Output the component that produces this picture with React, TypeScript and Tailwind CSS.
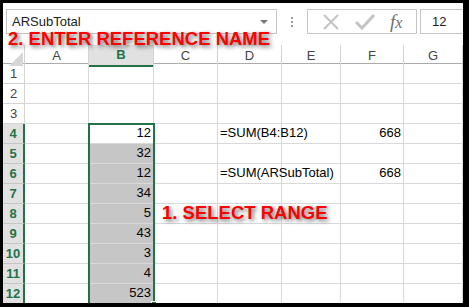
import React from "react";

const COLS = ["A", "B", "C", "D", "E", "F", "G"];
const GRID = "grid grid-cols-[22px_64px_65px_64px_64px_59px_63px_1fr]";

// column B values, rows 4..12
const values: Record<number, string> = {
  4: "12",
  5: "32",
  6: "12",
  7: "34",
  8: "5",
  9: "43",
  10: "3",
  11: "4",
  12: "523",
};

const XIcon = () => (
  <svg width="18" height="18" viewBox="0 0 18 18" fill="none">
    <path d="M2 2 L16 16 M16 2 L2 16" stroke="#c4c4c4" strokeWidth="2" />
  </svg>
);

const CheckIcon = () => (
  <svg width="20" height="16" viewBox="0 0 20 16" fill="none">
    <path d="M1 8 L7 14 L19 1" stroke="#c4c4c4" strokeWidth="3" />
  </svg>
);

const Cell = ({ children, right, className = "" }: { children?: React.ReactNode; right?: boolean; className?: string }) => (
  <div
    className={`h-[20px] border-r border-b border-[#d9d9d9] flex items-end pb-[2px] whitespace-nowrap overflow-visible text-[13px] leading-[16px] text-black ${
      right ? "justify-end pr-[2px]" : "pl-[2px]"
    } ${className}`}
  >
    {children}
  </div>
);

const App = () => {
  const rows = Array.from({ length: 12 }, (_, i) => i + 1);

  return (
    <div className="w-[469px] h-[307px] bg-black pt-[3px] pl-[3px] pr-[6px] pb-[4px] font-['Liberation_Sans',Arial,sans-serif]">
      <div className="relative w-full h-full bg-white overflow-hidden flex flex-col">
        {/* formula bar */}
        <div className="h-[42px] flex items-start pt-[6px] pl-[3px] shrink-0">
          <div className="w-[271px] h-[25px] border border-[#c6c6c6] flex items-center justify-between pl-[5px] pr-[8px]">
            <span className="text-[13px] text-[#222]">ARSubTotal</span>
            <span className="w-0 h-0 border-l-[4px] border-r-[4px] border-t-[4px] border-l-transparent border-r-transparent border-t-[#777]" />
          </div>
          <div className="w-[30px] h-[25px] flex flex-col items-center justify-center gap-[2px]">
            <span className="w-[2px] h-[2px] bg-[#9a9a9a]" />
            <span className="w-[2px] h-[2px] bg-[#9a9a9a]" />
            <span className="w-[2px] h-[2px] bg-[#9a9a9a]" />
          </div>
          <div className="w-[110px] h-[25px] border border-[#c6c6c6] flex items-center justify-around px-[6px]">
            <XIcon />
            <CheckIcon />
            <span className="font-['Liberation_Serif',serif] italic text-[19px] text-[#6f6f6f] leading-none">
              f<span className="text-[16px]">x</span>
            </span>
          </div>
          <div className="ml-[3px] flex-1 h-[25px] border border-[#c6c6c6] border-r-0 flex items-center pl-[11px]">
            <span className="text-[13px] text-[#222]">12</span>
          </div>
        </div>

        {/* sheet */}
        <div className="relative flex-1">
          {/* column headers */}
          <div className={`${GRID} h-[19px] border-b border-[#ababab]`}>
            <div className="border-r border-[#d4d4d4] flex items-end justify-end pr-[1px] pb-[1px]">
              <svg width="14" height="14" viewBox="0 0 14 14">
                <path d="M14 0 L14 14 L0 14 Z" fill="#d6d6d6" />
              </svg>
            </div>
            {COLS.map((c) =>
              c === "B" ? (
                <div
                  key={c}
                  className="bg-[#e1e1e1] border-r border-[#d4d4d4] border-b-2 border-b-[#217346] flex items-center justify-center text-[13px] font-bold text-[#217346]"
                >
                  {c}
                </div>
              ) : (
                <div key={c} className="border-r border-[#d4d4d4] flex items-center justify-center text-[13px] text-[#444]">
                  {c}
                </div>
              )
            )}
          </div>

          {rows.map((r) => {
            const sel = r >= 4;
            return (
              <div key={r} className={GRID}>
                <div
                  className={`h-[20px] border-b flex items-center justify-center text-[13px] ${
                    sel
                      ? "bg-[#e1e1e1] border-b-[#c6c6c6] border-r-2 border-r-[#217346] font-bold text-[#217346]"
                      : "border-r border-[#d4d4d4] text-[#444]"
                  }`}
                >
                  {r}
                </div>
                <Cell />
                <Cell right className={r >= 5 ? "bg-[#c6c6c6]" : ""}>
                  {values[r]}
                </Cell>
                <Cell />
                <Cell>{r === 4 ? "=SUM(B4:B12)" : r === 6 ? "=SUM(ARSubTotal)" : null}</Cell>
                <Cell />
                <Cell right>{r === 4 || r === 6 ? "668" : null}</Cell>
                <Cell />
              </div>
            );
          })}

          {/* selection outline B4:B12 */}
          <div className="absolute left-[85px] top-[78px] w-[67px] h-[200px] border-2 border-[#217346] pointer-events-none" />
          <div className="absolute left-[148px] top-[256px] w-[6px] h-[6px] bg-[#217346] border border-white" />
        </div>

        {/* annotations */}
        <div className="absolute left-[5px] top-[27px] text-[18.5px] leading-none font-bold text-[#ff0000] whitespace-nowrap [text-shadow:2px_2px_4px_rgba(0,0,0,0.6)]">
          2. ENTER REFERENCE NAME
        </div>
        <div className="absolute left-[159px] top-[201px] text-[18.5px] leading-none font-bold text-[#ff0000] whitespace-nowrap [text-shadow:2px_2px_4px_rgba(0,0,0,0.6)]">
          1. SELECT RANGE
        </div>
      </div>
    </div>
  );
};

export default App;
